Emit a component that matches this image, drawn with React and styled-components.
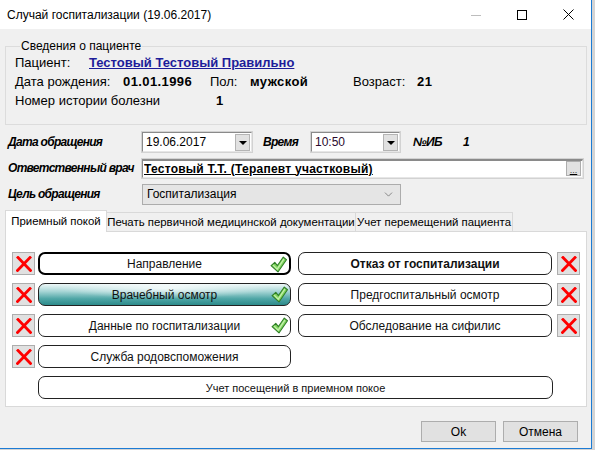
import React from 'react'
import styled, { createGlobalStyle, css } from 'styled-components'
import { ChevronDown } from 'lucide-react'

const GlobalStyle = createGlobalStyle`
  body {
    margin: 0;
    background: #d4d4d4;
    font-family: "Liberation Sans", Arial, sans-serif;
    color: #000;
  }
`

const Window = styled.div`
  width: 591px;
  height: 448px;
  background: #f0f0f0;
  border-right: 1px solid #1c7bd4;
  border-bottom: 1px solid #1c7bd4;
  display: flex;
  flex-direction: column;
`

const TitleBar = styled.div`
  height: 29px;
  background: #fff;
  display: flex;
  align-items: center;
  flex-shrink: 0;
`

const Title = styled.div`
  flex: 1;
  padding-left: 7px;
  font-size: 12px;
  color: #000;
`

const Ctrl = styled.div`
  width: 46px;
  height: 29px;
  display: flex;
  align-items: center;
  justify-content: center;
`

const Body = styled.div`
  flex: 1;
  display: flex;
  flex-direction: column;
  padding: 10px 0 0 5px;
`

const Group = styled.fieldset`
  width: 582px;
  box-sizing: border-box;
  margin: 0;
  padding: 0 9px 14px 9px;
  border: 1px solid #dcdcdc;
`

const Legend = styled.legend`
  font-size: 12px;
  line-height: 14px;
  padding: 0 1px;
  margin-left: 5px;
`

const InfoRow = styled.div`
  display: flex;
  align-items: center;
  height: 19px;
  font-size: 13px;
`

const Cell = styled.span`
  width: ${p => (p.w ? `${p.w}px` : 'auto')};
  flex-shrink: 0;
  font-weight: ${p => (p.b ? 'bold' : 'normal')};
  color: ${p => (p.link ? '#1d1d9a' : '#000')};
  text-decoration: ${p => (p.link ? 'underline' : 'none')};
  letter-spacing: ${p => (p.b && !p.link ? '0.4px' : '0')};
  white-space: nowrap;
`

const Form = styled.div`
  display: grid;
  grid-template-columns: 134px 1fr;
  grid-auto-rows: 20px;
  row-gap: 6px;
  margin-top: 7px;
  padding-left: 3px;
  align-items: center;
`

const FLabel = styled.span`
  font-size: 12px;
  font-weight: bold;
  font-style: italic;
  letter-spacing: -0.7px;
  white-space: nowrap;
  width: ${p => (p.w ? `${p.w}px` : 'auto')};
  margin-left: ${p => p.ml || 0}px;
`

const Line = styled.div`
  display: flex;
  align-items: center;
  height: 20px;
`

const Input = styled.div`
  box-sizing: border-box;
  width: ${p => p.w}px;
  height: ${p => p.h || 20}px;
  display: flex;
  align-items: center;
  background: #fff;
  border: 1px solid;
  border-color: #8a8a8a #e6e6e6 #e6e6e6 #8a8a8a;
  box-shadow: 0 0 0 1px #d2d2d2;
  font-size: 12px;
  padding-left: 3px;
  ${p => p.strong && css`
    font-weight: bold;
    text-decoration: underline;
    letter-spacing: 0.25px;
    padding-left: 1px;
    border-top: 2px solid #8a8a8a;
  `}
`

const InputText = styled.span`
  flex: 1;
  white-space: nowrap;
  overflow: hidden;
`

const DropBtn = styled.span`
  width: 13px;
  height: 15px;
  margin-right: 1px;
  background: #e1e1e1;
  border: 1px solid #b4b4b4;
  display: flex;
  align-items: center;
  justify-content: center;
  &::after {
    content: '';
    border-left: 4px solid transparent;
    border-right: 4px solid transparent;
    border-top: 4px solid #000;
    margin-top: 1px;
  }
`

const DotsBtn = styled.span`
  width: 13px;
  height: 13px;
  margin-right: 1px;
  background: #e1e1e1;
  border: 1px solid #adadad;
  font-size: 9px;
  font-weight: normal;
  letter-spacing: 0;
  color: #444;
  display: flex;
  align-items: flex-end;
  justify-content: center;
  line-height: 10px;
`

const Select = styled.div`
  box-sizing: border-box;
  width: 259px;
  height: 21px;
  background: #e5e5e5;
  border: 1px solid #acacac;
  display: flex;
  align-items: center;
  justify-content: space-between;
  padding: 0 5px 0 4px;
  font-size: 12px;
  color: #000;
`

const TabStrip = styled.div`
  display: flex;
  align-items: flex-end;
  height: 21px;
  margin-top: 6px;
  position: relative;
  z-index: 1;
`

const Tab = styled.div`
  box-sizing: border-box;
  width: ${p => p.w}px;
  height: ${p => (p.active ? 22 : 19)}px;
  margin-bottom: ${p => (p.active ? -1 : 0)}px;
  margin-left: ${p => (p.first ? 0 : -1)}px;
  background: ${p => (p.active ? '#fff' : '#f0f0f0')};
  border: 1px solid #d9d9d9;
  border-bottom: none;
  font-size: 11.4px;
  display: flex;
  align-items: center;
  justify-content: center;
  padding-bottom: ${p => (p.active ? 2 : 0)}px;
  white-space: nowrap;
`

const Panel = styled.div`
  box-sizing: border-box;
  width: 582px;
  height: 176px;
  background: #fff;
  border: 1px solid #d9d9d9;
  display: grid;
  grid-template-columns: 26px 260px 259px 23px;
  grid-auto-rows: 23px;
  row-gap: 8px;
  padding: 20px 0 0 6px;
  align-content: start;
  justify-items: start;
`

const DelBtn = styled.div`
  box-sizing: border-box;
  width: 23px;
  height: 23px;
  background: #e1e1e1;
  border: 1px solid #adadad;
  display: flex;
  align-items: center;
  justify-content: center;
  grid-column: ${p => p.col};
`

const ActionBtn = styled.div`
  position: relative;
  box-sizing: border-box;
  width: ${p => (p.wide ? 515 : p.col === 3 ? 254 : 253)}px;
  height: 23px;
  grid-column: ${p => (p.wide ? '2 / 4' : p.col)};
  border: ${p => (p.focus ? '2px solid #000' : '1px solid #222')};
  border-radius: 7px;
  background: ${p =>
    p.active
      ? 'radial-gradient(ellipse 60% 70% at 50% 20%, rgba(255,255,255,0.75), rgba(255,255,255,0) 70%), linear-gradient(#eef8f8 0%, #a8d6d6 35%, #4fa6a6 70%, #2d8b8b 100%)'
      : '#fff'};
  display: flex;
  align-items: center;
  justify-content: center;
  font-size: ${p => (p.wide ? 11 : 12)}px;
  font-weight: ${p => (p.bold ? 'bold' : 'normal')};
  color: #111;
  white-space: nowrap;
`

const CheckWrap = styled.span`
  position: absolute;
  right: 2px;
  top: 2px;
  width: 17px;
  height: 17px;
`

const Footer = styled.div`
  display: flex;
  justify-content: flex-end;
  gap: 7px;
  padding-right: 13px;
  margin-top: 14px;
`

const DlgBtn = styled.div`
  box-sizing: border-box;
  width: 75px;
  height: 21px;
  background: #e1e1e1;
  border: 1px solid #adadad;
  display: flex;
  align-items: center;
  justify-content: center;
  font-size: 12px;
`

function RedX() {
  return (
    <svg width="16" height="16" viewBox="0 0 16 16">
      <path d="M2 1.5 L14.5 14.5 M14 1.5 L1.5 14.5" stroke="#f00" strokeWidth="2.8" strokeLinecap="square" fill="none" />
    </svg>
  )
}

function Check() {
  return (
    <CheckWrap>
      <svg width="17" height="17" viewBox="0 0 16 16">
        <path
          d="M1 9 L4.5 6 L7 9 L12.5 1 L15.5 3.5 L7.5 15 Z"
          fill="#7fd45c"
          stroke="#2f7d27"
          strokeWidth="1"
          strokeLinejoin="round"
        />
        <path d="M3 8.6 L6.8 12.4 L13 3" stroke="#c4f0ad" strokeWidth="1.2" fill="none" />
      </svg>
    </CheckWrap>
  )
}

export default function App() {
  return (
    <>
      <GlobalStyle />
      <Window>
        <TitleBar>
          <Title>Случай госпитализации (19.06.2017)</Title>
          <Ctrl>
            <svg width="10" height="10" viewBox="0 0 10 10"><path d="M0 5.5 H10" stroke="#bdbdbd" strokeWidth="1" /></svg>
          </Ctrl>
          <Ctrl>
            <svg width="10" height="10" viewBox="0 0 10 10"><rect x="0.5" y="0.5" width="9" height="9" fill="none" stroke="#000" strokeWidth="1" /></svg>
          </Ctrl>
          <Ctrl>
            <svg width="11" height="11" viewBox="0 0 11 11"><path d="M0.5 0.5 L10.5 10.5 M10.5 0.5 L0.5 10.5" stroke="#000" strokeWidth="1" /></svg>
          </Ctrl>
        </TitleBar>

        <Body>
          <Group>
            <Legend>Сведения о пациенте</Legend>
            <InfoRow>
              <Cell w={74}>Пациент:</Cell>
              <Cell b link>Тестовый Тестовый Правильно</Cell>
            </InfoRow>
            <InfoRow>
              <Cell w={108}>Дата рождения:</Cell>
              <Cell w={87} b>01.01.1996</Cell>
              <Cell w={40}>Пол:</Cell>
              <Cell w={103} b>мужской</Cell>
              <Cell w={64}>Возраст:</Cell>
              <Cell b>21</Cell>
            </InfoRow>
            <InfoRow>
              <Cell w={201}>Номер истории болезни</Cell>
              <Cell b>1</Cell>
            </InfoRow>
          </Group>

          <Form>
            <FLabel>Дата обращения</FLabel>
            <Line>
              <Input w={110}>
                <InputText>19.06.2017</InputText>
                <DropBtn />
              </Input>
              <FLabel w={48} ml={11}>Время</FLabel>
              <Input w={89}>
                <InputText style={{ color: '#2b0a2e' }}>10:50</InputText>
                <DropBtn />
              </Input>
              <FLabel w={50} ml={13}>№ИБ</FLabel>
              <FLabel>1</FLabel>
            </Line>

            <FLabel>Ответственный врач</FLabel>
            <Line>
              <Input w={441} h={19} strong>
                <InputText>Тестовый Т.Т. (Терапевт участковый)</InputText>
                <DotsBtn>...</DotsBtn>
              </Input>
            </Line>

            <FLabel>Цель обращения</FLabel>
            <Line>
              <Select>
                <span>Госпитализация</span>
                <ChevronDown size={13} strokeWidth={1.2} color="#555" />
              </Select>
            </Line>
          </Form>

          <TabStrip>
            <Tab w={102} first active>Приемный покой</Tab>
            <Tab w={250}>Печать первичной медицинской документации</Tab>
            <Tab w={158}>Учет перемещений пациента</Tab>
          </TabStrip>
          <Panel>
            <DelBtn col={1}><RedX /></DelBtn>
            <ActionBtn col={2} focus>Направление<Check /></ActionBtn>
            <ActionBtn col={3} bold>Отказ от госпитализации</ActionBtn>
            <DelBtn col={4}><RedX /></DelBtn>

            <DelBtn col={1}><RedX /></DelBtn>
            <ActionBtn col={2} active>Врачебный осмотр<Check /></ActionBtn>
            <ActionBtn col={3}>Предгоспитальный осмотр</ActionBtn>
            <DelBtn col={4}><RedX /></DelBtn>

            <DelBtn col={1}><RedX /></DelBtn>
            <ActionBtn col={2}>Данные по госпитализации<Check /></ActionBtn>
            <ActionBtn col={3}>Обследование на сифилис</ActionBtn>
            <DelBtn col={4}><RedX /></DelBtn>

            <DelBtn col={1}><RedX /></DelBtn>
            <ActionBtn col={2}>Служба родовспоможения</ActionBtn>

            <ActionBtn wide>Учет посещений в приемном покое</ActionBtn>
          </Panel>

          <Footer>
            <DlgBtn>Ok</DlgBtn>
            <DlgBtn>Отмена</DlgBtn>
          </Footer>
        </Body>
      </Window>
    </>
  )
}
